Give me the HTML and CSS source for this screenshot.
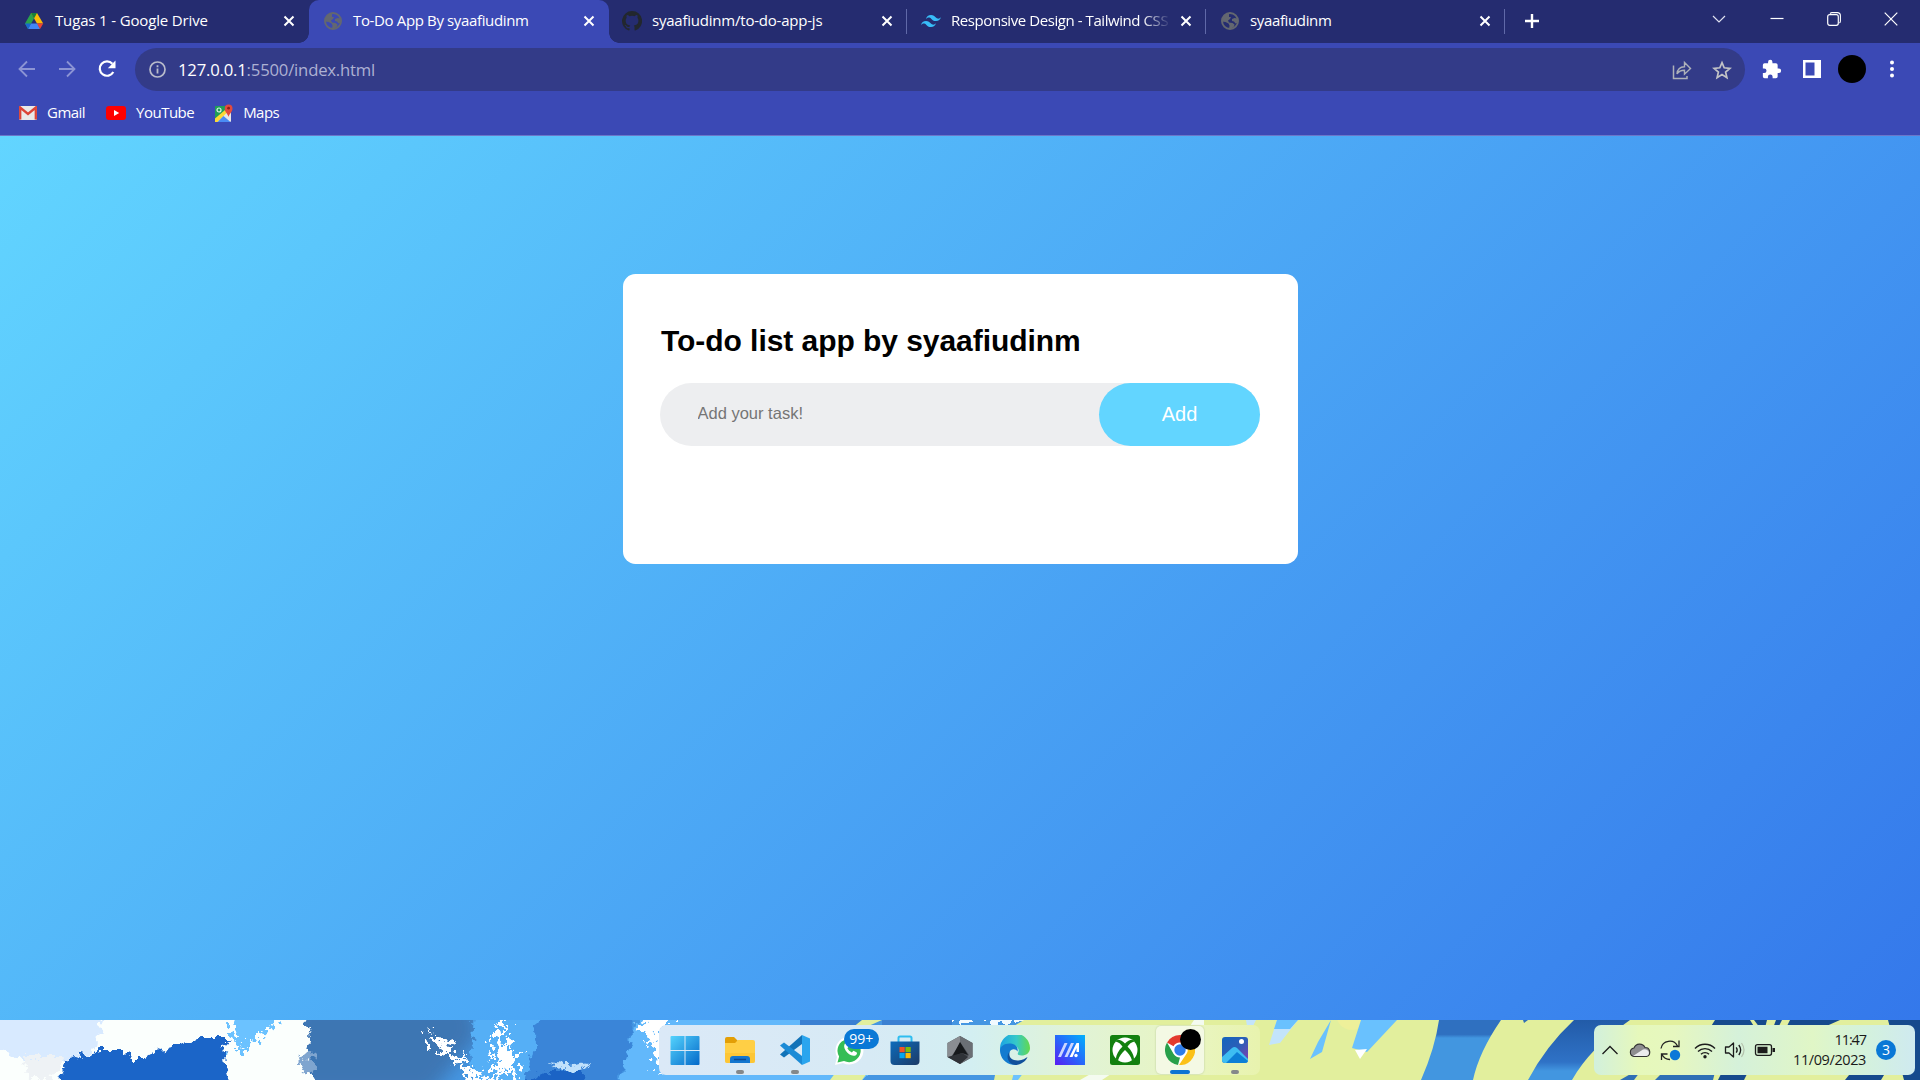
FILE: index.html
```html
<!DOCTYPE html>
<html lang="en">
<head>
<meta charset="utf-8">
<title>To-Do App By syaafiudinm</title>
<link rel="stylesheet" href="styles.css">
</head>
<body>
<svg class="defs" width="0" height="0">
  <symbol id="x" viewBox="0 0 14 14"><path d="M2.5 2.5l9 9M11.500 2.500l-9 9" stroke="#fff" stroke-width="2" fill="none"/></symbol>
  <symbol id="globe" viewBox="0 0 20 20"><circle cx="10" cy="10" r="8" fill="none" stroke="#636770" stroke-width="2"/><path d="M9 2C5 2 2 6 2 10.500l3.500.5 3 1.500 1 2-.5 3.500h2l3-2.500.5-2-2-1.500-3.500-.5-1-2 2-1.500 1-2H9zM12 8l2.500-1 3 .5.500 4-2.500 1-1.500-2-2-.5z" fill="#636770"/></symbol>
</svg>

<header class="browser">
  <nav class="tabstrip">
    <div class="tab">
      <svg width="20" height="20" viewBox="0 0 20 20"><path d="M7 2L1 12.500 4 18l6-10.500z" fill="#2ba24c"/><path d="M7 2h6l6.200 10.500H13z" fill="#fbbc05"/><path d="M7 2h6l-3 5.500z" fill="#188038"/><path d="M4 18l3-5.500h6.500L16 18z" fill="#4285f4"/><path d="M1 12.500h6L4 18z" fill="#1967d2"/><path d="M13 12.500h6.200L16 18z" fill="#ea4335"/></svg>
      <span class="label drive">Tugas 1 - Google Drive</span>
      <svg width="14" height="14"><use href="#x"/></svg>
    </div>
    <div class="tab active">
      <svg width="20" height="20"><use href="#globe"/></svg>
      <span class="label">To-Do App By syaafiudinm</span>
      <svg width="14" height="14"><use href="#x"/></svg>
    </div>
    <div class="tab">
      <svg width="20" height="20" viewBox="0 0 16 16"><path fill="#22272e" d="M8 0a8 8 0 0 0-2.530 15.590c.4.070.55-.17.55-.38v-1.490c-2.010.37-2.530-.49-2.690-.94-.09-.23-.48-.94-.82-1.130-.28-.15-.68-.52-.01-.53.63-.01 1.080.58 1.230.82.72 1.210 1.870.87 2.330.66.070-.52.28-.87.51-1.070-1.780-.2-3.640-.89-3.640-3.950 0-.87.31-1.590.82-2.150-.08-.2-.36-1.020.08-2.120 0 0 .67-.21 2.200.82a7.600 7.600 0 0 1 4 0c1.530-1.040 2.200-.82 2.200-.82.44 1.100.16 1.920.08 2.120.51.56.82 1.270.82 2.150 0 3.070-1.870 3.750-3.650 3.950.29.25.54.73.54 1.480v2.200c0 .21.15.46.55.38A8 8 0 0 0 8 0z"/></svg>
      <span class="label repo">syaafiudinm/to-do-app-js</span>
      <svg width="14" height="14"><use href="#x"/></svg>
    </div>
    <div class="tab ruled">
      <svg width="20" height="20" viewBox="0 0 54 54"><path fill="#38bdf8" d="M27 11c-7.200 0-11.700 3.600-13.500 10.800 2.700-3.600 5.850-4.950 9.450-4.050 2.050.51 3.520 2 5.150 3.660C30.740 24.090 33.810 27.200 40.500 27.200c7.200 0 11.700-3.600 13.500-10.800-2.700 3.600-5.850 4.950-9.450 4.050-2.050-.51-3.520-2-5.150-3.660C36.760 14.110 33.690 11 27 11zM13.500 27.200C6.300 27.200 1.800 30.800 0 38c2.700-3.600 5.850-4.950 9.450-4.050 2.050.51 3.520 2 5.150 3.660 2.640 2.680 5.710 5.790 12.400 5.790 7.200 0 11.700-3.600 13.500-10.800-2.700 3.600-5.850 4.950-9.450 4.050-2.050-.51-3.520-2-5.150-3.660-2.640-2.680-5.710-5.790-12.400-5.790z"/></svg>
      <span class="label fade">Responsive Design - Tailwind CSS</span>
      <svg width="14" height="14"><use href="#x"/></svg>
    </div>
    <div class="tab ruled last">
      <svg width="20" height="20"><use href="#globe"/></svg>
      <span class="label">syaafiudinm</span>
      <svg width="14" height="14"><use href="#x"/></svg>
    </div>
    <svg class="newtab" width="18" height="18" viewBox="0 0 18 18"><path d="M9 2v14M2 9h14" stroke="#fff" stroke-width="2.400"/></svg>
    <div class="controls">
      <svg width="14" height="14" viewBox="0 0 14 14"><path d="M1 4l6 6 6-6" fill="none" stroke="#dfe1f0" stroke-width="1.200"/></svg>
      <svg width="14" height="14" viewBox="0 0 14 14"><path d="M.5 6.500h13" stroke="#fff" stroke-width="1.200"/></svg>
      <svg width="14" height="14" viewBox="0 0 14 14"><rect x=".7" y="2.700" width="10.600" height="10.600" rx="2" fill="none" stroke="#fff" stroke-width="1.200"/><path d="M3 1.500Q4 .6 5 .6h5.200q3.200 0 3.200 3.200V9q0 1.300-1 2" fill="none" stroke="#fff" stroke-width="1.100"/></svg>
      <svg width="14" height="14" viewBox="0 0 14 14"><path d="M.7.7l12.600 12.600M13.300.7L.7 13.300" stroke="#fff" stroke-width="1.200"/></svg>
    </div>
  </nav>

  <div class="toolbar">
    <div class="cell"><svg width="18" height="18" viewBox="0 0 18 18"><path d="M17 9H2M9 1.500L1.500 9 9 16.500" fill="none" stroke="#8c94d4" stroke-width="1.800"/></svg></div>
    <div class="cell"><svg width="18" height="18" viewBox="0 0 18 18"><path d="M1 9h15M9 1.500L16.500 9 9 16.500" fill="none" stroke="#8c94d4" stroke-width="1.800"/></svg></div>
    <div class="cell"><svg width="20" height="20" viewBox="0 0 20 20"><path d="M16.300 13a7.200 7.200 0 1 1-.9-8.200" fill="none" stroke="#fff" stroke-width="2.200"/><path d="M18.500 1.500v7.700h-7.700z" fill="#fff"/></svg></div>
    <div class="omnibox">
      <svg width="17" height="17" viewBox="0 0 17 17"><circle cx="8.500" cy="8.500" r="7.500" fill="none" stroke="#b9bccb" stroke-width="1.700"/><path d="M8.500 7.600v5M8.500 4.300v1.900" stroke="#b9bccb" stroke-width="1.800"/></svg>
      <span class="url"><b>127.0.0.1</b>:5500/index.html</span>
      <div class="cell"><svg width="20" height="20" viewBox="0 0 20 20"><path d="M1.500 5.500v13h13.500V16" fill="none" stroke="#aeb1b9" stroke-width="1.500"/><path d="M5 14c.3-4.600 3-7 7.500-7.200V2.500l6 6-6 5.700V10.200C9 10.200 6.500 11.500 5 14z" fill="none" stroke="#aeb1b9" stroke-width="1.400"/></svg></div>
      <div class="cell"><svg width="20" height="20" viewBox="0 0 20 20"><path d="M10 2.600l2.200 5.200 5.700.5-4.300 3.700 1.300 5.600-4.900-3-4.900 3L6.400 12 2.100 8.300l5.700-.5z" fill="none" stroke="#c2c3c6" stroke-width="1.700"/></svg></div>
    </div>
    <div class="cell"><svg width="20" height="20" viewBox="1 0 23 23"><path fill="#fff" d="M20.500 11H19V7a2 2 0 0 0-2-2h-4V3.500a2.500 2.500 0 0 0-5 0V5H4a2 2 0 0 0-2 2v3.800h1.500a2.700 2.700 0 0 1 0 5.400H2V20a2 2 0 0 0 2 2h3.800v-1.500a2.700 2.700 0 0 1 5.400 0V22H17a2 2 0 0 0 2-2v-4h1.500a2.500 2.500 0 0 0 0-5z"/></svg></div>
    <div class="cell"><svg width="18" height="18" viewBox="0 0 18 18"><path fill-rule="evenodd" fill="#fff" d="M0 0h18v18H0zM2.500 2.500v13h9v-13z"/></svg></div>
    <div class="cell"><span class="avatar"></span></div>
    <div class="cell"><svg width="4" height="18" viewBox="0 0 4 18"><g fill="#fff"><circle cx="2" cy="2.500" r="2"/><circle cx="2" cy="9" r="2"/><circle cx="2" cy="15.500" r="2"/></g></svg></div>
  </div>

  <div class="bookmarks">
    <a><svg width="18" height="14" viewBox="0 0 18 14"><rect width="18" height="14" rx="1.500" fill="#e9e9e9"/><path d="M1.200 13.500V1.500L9 8l7.800-6.500v12" fill="none" stroke="#dc4437" stroke-width="2.300"/></svg><span>Gmail</span></a>
    <a><svg width="20" height="14" viewBox="0 0 20 14"><rect width="20" height="14" rx="3" fill="#f00"/><path d="M8 4l5.200 3L8 10z" fill="#fff"/></svg><span>YouTube</span></a>
    <a><svg width="18" height="18" viewBox="0 0 18 18"><rect x="0" y="2" width="16" height="16" rx="1" fill="#e6e6e6"/><path d="M0 2h12v5L0 17z" fill="#1f9d58"/><path d="M0 14.500L10 6l2 2.500L2.500 18H0z" fill="#fdd835"/><path d="M2.500 18l6-6 7 6z" fill="#4a8bf5"/><circle cx="4" cy="6" r="2" fill="none" stroke="#dff2e7" stroke-width="1.200"/><path d="M13.500 13c-.4-3-3.800-5-3.800-8.500a3.900 3.900 0 0 1 7.800 0c0 3.500-3.600 5.500-4 8.500z" fill="#e34a3d"/><circle cx="13.600" cy="4.200" r="1.400" fill="#8c1f16"/></svg><span>Maps</span></a>
  </div>
</header>

<main class="page">
  <section class="todo">
    <h1>To-do list app by syaafiudinm</h1>
    <form class="row">
      <input type="text" placeholder="Add your task!">
      <button type="button">Add</button>
    </form>
  </section>
</main>

<footer class="taskbar">
  <svg class="wallpaper" width="1920" height="60" viewBox="0 0 1920 60" preserveAspectRatio="none">
    <defs>
      <filter id="rough" x="-5%" y="-30%" width="110%" height="160%" color-interpolation-filters="sRGB"><feTurbulence type="fractalNoise" baseFrequency=".13" numOctaves="4" seed="4"/><feDisplacementMap in="SourceGraphic" scale="16" xChannelSelector="R" yChannelSelector="G"/></filter>
      <filter id="spray" x="-5%" y="-30%" width="110%" height="160%" color-interpolation-filters="sRGB"><feTurbulence type="fractalNoise" baseFrequency=".16" numOctaves="4" seed="9"/><feDisplacementMap in="SourceGraphic" scale="34" xChannelSelector="R" yChannelSelector="G"/></filter>
      <filter id="soft"><feGaussianBlur stdDeviation="9"/></filter>
      <linearGradient id="d1" x2="0" y2="1"><stop offset=".24" stop-color="#2f70c0"/><stop offset=".3" stop-color="#4296e0"/></linearGradient>
      <linearGradient id="d2" x2="0" y2="1"><stop offset="0" stop-color="#225ba8"/><stop offset=".7" stop-color="#2f72c6"/><stop offset=".85" stop-color="#4296e0"/></linearGradient>
    </defs>
    <rect width="1920" height="60" fill="#4596e2"/>
    <path d="M290 -20h180l10 35-50 60H290z" fill="#3c76b3" filter="url(#soft)"/>
    <g filter="url(#rough)">
      <path d="M475 -10h85v50l-30 30h-60z" fill="#55aff6"/>
      <path d="M540 -10h96l-10 50-12 30h-90z" fill="#3a85d8"/>
      <path d="M636 5l40-15h190v80H617z" fill="#62b8fb"/>
      <path d="M525 62l25-12 30 0 10 22h-65z" fill="#1b63c5"/>
      <path d="M-20 -20h324l6 40-4 24 20 36H-20z" fill="#fbfffd"/>
      <path d="M-20 -20h124l-8 48-34 16L26 42-20 24z" fill="#d8eaff"/>
      <path d="M24 36l44 0-18 24H26z" fill="#eef2f5"/>
      <path d="M54 70l14-30 30-10 25 0 8 8 14 0 14-8 16-4 26-7h32l-10 6 2 20 8 26z" fill="#1b65c8"/>
      <path d="M298 38l14-4 6 14-14 6z" fill="#7fa5cf"/>
      <path d="M548 43l20 2 22-3-12 8-16-1z" fill="#bfe0fb"/>
    </g>
    <g filter="url(#spray)">
      <path d="M234 -10h46l-8 20-16 4-10 18-10-1-4-20z" fill="#6bc2ff"/>
      <path d="M424 10l12 6 16 10 10 16 14 8 16 24h-18l-14-28-10-8-14-10z" fill="#fff"/>
      <path d="M502 -8h8l-6 16 2 16 12 10-2 18-16-4-6 22-7-6 8-20-1-20z" fill="#fff"/>
      <path d="M638 -6h30v62l-12-14-4-20-10-12z" fill="#fff"/>
    </g>
    <g filter="url(#rough)"><path d="M900 -10h70v12h-70zM985 -10h80v12h-80z" fill="#f2faff"/></g>
    <path d="M800 0h62v8h-62zM882 0h70v8h-70z" fill="#3a80d2"/>
    <path d="M862 0h20l-18 8h-12zM836 52h32l-6 8h-32zM1024 0l-20 12-10 48H1920V0z" fill="#e2ef9d"/>
    <path d="M1080 60l14-8h20l-12 8zM1194 0h10v6h-14z" fill="#f4fbf0"/>
    <path d="M1014 52h10l-6 8h-6z" fill="#6bc2ff"/>
    <circle cx="1352" cy="-6" r="16" fill="#eef09a"/>
    <path d="M1246 0h10l-3 6h-6zM1277 0h21l-18 23-11 2z" fill="#c3e4fb"/>
    <path d="M1277 0h21l-8 9h-16zM1331 0l-9 32-12 7 8-17zM1361 0h36l-30 32-15-4z" fill="#69c1fe"/>
    <path d="M1355 30l12-1-7 10z" fill="#fff"/>
    <path d="M1439 0h62q-22 32-28 60h-52q14-32 18-60z" fill="url(#d1)"/>
    <path d="M1574 0h56q-40 28-58 60h-44q18-34 46-60z" fill="url(#d2)"/>
    <path d="M1523 0h5l-4 3zM1620 60l14-8h6l-6 8zM1655 60l8-8h52l-2 8z" fill="#2f6fb5"/>
    <path d="M1715 0h125l-18 8h-112zM1722 52h26l-4 8h-26zM1845 60l8-10h34l-6 10zM1888 0h32v60h-16z" fill="#164a8d"/>
    <path d="M1750 0h4l6 8h-5zM1767 0h9l-3 8h-8zM1782 0h8l-4 8h-8z" fill="#e2ef9d"/>
  </svg>

  <div class="dock">
    <div class="app"><svg viewBox="0 0 30 30"><defs><linearGradient id="w" x2="1" y2="1"><stop stop-color="#54d3fd"/><stop offset="1" stop-color="#0469c9"/></linearGradient></defs><path fill="url(#w)" d="M.5 2q0-1 1-1H14.500v14H.5zM15.500 1h13q1 0 1 1v13h-14zM.5 16h14v14H1.500q-1 0-1-1zM15.500 16h14v13q0 1-1 1h-13z"/></svg></div>
    <div class="app run"><svg viewBox="0 0 30 30"><path d="M0 4q0-2 2-2h7l4 4v4H0z" fill="#e39f06"/><path d="M0 8l10 0 3-3h15q2 0 2 2v19q0 2-2 2H2q-2 0-2-2z" fill="#ffcf45"/><path d="M0 18h30v8q0 2-2 2H2q-2 0-2-2z" fill="#fbc02d" opacity=".6"/><path d="M5 28v-4q0-3 3-3h14q3 0 3 3v4z" fill="#1376cf"/><path d="M9 24.500h12" stroke="#0b4a91" stroke-width="1.500"/></svg></div>
    <div class="app run"><svg viewBox="0 0 30 30"><path d="M22 0l8 3.500v23L22 30z" fill="#2aa5ee"/><path d="M22 0v9L4 22.500 0 19.500z" fill="#1273b8"/><path d="M22 30v-9L4 7.500 0 10.500z" fill="#1b8bd6"/></svg></div>
    <div class="app"><svg viewBox="0 0 30 30"><path d="M0 30l2-8A14 14 0 1 1 8 28z" fill="#fff"/><path d="M2.500 27.500l1.600-6A11.600 11.600 0 1 1 9 26z" fill="#35bd55"/><path d="M10 8.500c1-1 2-.8 2.600.6l1 2.300-1.200 1.900c1 2 2.400 3.200 4.400 4.100l1.700-1.700 3 1.500c1 .7.400 2.300-.6 3-3.200 2-8-.8-10.300-4.600C9 13 8.600 10 10 8.500z" fill="#fff"/></svg><span class="count">99+</span></div>
    <div class="app"><svg viewBox="0 0 30 30"><defs><linearGradient id="s" x2="1" y2="1"><stop stop-color="#0c6cbc"/><stop offset="1" stop-color="#1d3a66"/></linearGradient></defs><path d="M8.500 7V3q0-1.500 1.500-1.500h10q1.500 0 1.500 1.500v4" fill="none" stroke="#2fbdf0" stroke-width="2"/><path d="M.5 6.500h29V26q0 4-4 4h-21q-4 0-4-4z" fill="url(#s)"/><path d="M9.500 12H14.700v5.200H9.500z" fill="#f35325"/><path d="M15.500 12h5.200v5.200h-5.200z" fill="#81bc06"/><path d="M9.500 18h5.200v5.200H9.500z" fill="#05a6f0"/><path d="M15.500 18h5.200v5.200h-5.200z" fill="#ffba08"/></svg></div>
    <div class="app"><svg viewBox="0 0 30 30"><path d="M15 1l12.500 7v14L15 29 2.500 22V8z" fill="#4a4e54"/><path d="M15 1v8L6 22l-3.500 0V8z" fill="#8a8d92"/><path d="M27.500 8v14L15 29l9-9L15 7V1z" fill="#6b6f75"/><path d="M15 7l8 13-6-2-10 4z" fill="#17191c"/><path d="M2.500 22L17 18l6 4-8 7z" fill="#2f3237"/></svg></div>
    <div class="app"><svg viewBox="0 0 30 30"><defs><linearGradient id="e" x2="1"><stop stop-color="#1ba4e4"/><stop offset=".55" stop-color="#36c9c8"/><stop offset="1" stop-color="#63d94c"/></linearGradient></defs><path d="M0 14A15 15 0 0 1 30 13c0 5-4 7.500-8.500 7.500-3 0-4.500-1-3.500-2.600 2-3.400-.5-7.400-6-7.400C5 10.500 1 14 .5 18z" fill="url(#e)"/><path d="M0 15c.5-4 5-7 10.500-6.500 5 .5 8 4 7 8-2-3.500-7-2.500-8 1C8 23 13 28 19 28q-3 2-6 1.800C5.500 29 0 23 0 15z" fill="#137bd0"/><path d="M9.500 17c-1.500 5.500 3 9 9 8.500 4 0 7-2.500 9-3.500C25.500 27 20 30 15 30 8 29 5.500 21 9.500 17z" fill="#11509b"/></svg></div>
    <div class="app"><svg viewBox="0 0 30 30"><defs><linearGradient id="m" x1="0" y1="1" x2="1" y2="0"><stop stop-color="#5a1cf2"/><stop offset=".5" stop-color="#2669fb"/><stop offset="1" stop-color="#00b1fb"/></linearGradient></defs><path fill="url(#m)" d="M0 0h30v30H0z"/><path d="M3 22L9.500 8h3L6 22zM9.500 22L16 8h3l-6.500 14z" fill="#cdd6ff"/><path d="M14.500 22L21.500 8H24v9h-2.500v-4L17.500 22z" fill="#fff"/><circle cx="21" cy="20.500" r="1.700" fill="#fff"/></svg></div>
    <div class="app"><svg viewBox="0 0 30 30"><rect width="30" height="30" rx="2.500" fill="#13800f"/><circle cx="15" cy="15" r="12.500" fill="#fff"/><path d="M15 8.500c-2-2-5-3.800-7.300-3.700L5.500 6.500c3 .3 5.500 3 7 5C9 15 6 20 6 24l2 1.500c1-4 4-8 7-10.500 3 2.500 6 6.500 7 10.500l2-1.500c0-4-3-9-6.500-12.500 1.500-2 4-4.700 7-5l-2.200-1.700C20 4.700 17 6.500 15 8.500z" fill="#13800f"/></svg></div>
    <div class="app current"><svg viewBox="0 0 30 30"><circle cx="15" cy="15" r="15" fill="#fff"/><path d="M15 0A15 15 0 0 1 28 7.500H15a7.500 7.500 0 0 0-6.500 3.700L2 7.500A15 15 0 0 1 15 0z" fill="#e33b2e"/><path d="M2 7.500l6.500 11.300A7.500 7.500 0 0 0 15 22.500l-2 7.400A15 15 0 0 1 2 7.500z" fill="#28a04a"/><path d="M28 7.500A15 15 0 0 1 14 30l7.500-11.200A7.500 7.500 0 0 0 20.300 9V7.500z" fill="#fbc116"/><circle cx="15" cy="15" r="7" fill="#fff"/><circle cx="15" cy="15" r="5.700" fill="#2f7de9"/></svg><span class="dot"></span></div>
    <div class="app run"><svg viewBox="0 0 30 30"><defs><linearGradient id="p" x1="0" y1="0" x2="1" y2="1"><stop stop-color="#1364bd"/><stop offset=".5" stop-color="#2b5fb8"/><stop offset="1" stop-color="#8a3bb0"/></linearGradient></defs><rect x="2" y="2" width="26" height="26" rx="3" fill="url(#p)"/><path d="M2 22l10-9q2.500-2 5 0l11 11v1q0 3-3 3H5q-3 0-3-3z" fill="#3dbdf2"/><path d="M6 28L17 17l11 9q-1 2-3 2z" fill="#0c7fd6"/><circle cx="21.500" cy="6.500" r="2.500" fill="#fff"/></svg></div>
  </div>

  <div class="tray">
    <div class="item"><svg width="18" height="10" viewBox="0 0 18 10"><path d="M1.500 9L9 1.500 16.500 9" fill="none" stroke="#1c1c1c" stroke-width="1.300"/></svg></div>
    <div class="item"><svg width="22" height="16" viewBox="0 0 22 16"><path d="M5 14.500a4.300 4.300 0 0 1 0-8.500A6 6 0 0 1 16 5.500a4.600 4.600 0 0 1 1.500 9z" fill="#8e8e90" stroke="#333" stroke-width="1.100"/><path d="M4 14l10-6.500q5-1 6 3.500-.5 3-3 3z" fill="#ececee"/></svg></div>
    <div class="item"><svg width="22" height="22" viewBox="0 0 22 22"><path d="M2 9.500A8.800 8.800 0 0 1 18.500 7M20 1.500v6h-6M2.500 21v-6h6M3 15.500a8.800 8.800 0 0 0 8 5" fill="none" stroke="#222" stroke-width="1.300"/><circle cx="16" cy="16" r="5.200" fill="#0b78d8"/></svg></div>
    <div class="item wifi"><svg width="22" height="17" viewBox="0 0 22 17"><path d="M1 6.500a14 14 0 0 1 20 0M4 9.500a10 10 0 0 1 14 0M7 12.300a5.700 5.700 0 0 1 8 0" fill="none" stroke="#1c1c1c" stroke-width="1.400"/><circle cx="11" cy="14.800" r="1.700" fill="#1c1c1c"/></svg></div>
    <div class="item"><svg width="22" height="18" viewBox="0 0 22 18"><path d="M1.500 6h3.500L9.500 2v14L5 12H1.500z" fill="none" stroke="#1c1c1c" stroke-width="1.300" stroke-linejoin="round"/><path d="M12.200 6.300q2 2.700 0 5.400M14.800 4q3.700 5 0 10" fill="none" stroke="#1c1c1c" stroke-width="1.300"/><path d="M17.500 2q5 7 0 14" fill="none" stroke="#b5c2ac" stroke-width="1.200"/></svg></div>
    <div class="item"><svg width="22" height="14" viewBox="0 0 22 14"><rect x="1.500" y="1.700" width="16" height="10.600" rx="2" fill="none" stroke="#1c1c1c" stroke-width="1.300"/><path d="M3.500 3.700h10v6.600h-10zM18.500 5H21v4h-2.500z" fill="#1c1c1c"/></svg></div>
    <div class="clock"><span class="time">11:47</span><span class="date">11/09/2023</span></div>
    <span class="notice">3</span>
  </div>
</footer>
</body>
</html>
```
FILE: styles.css
```css
* { box-sizing: border-box; margin: 0; padding: 0; }

body {
  width: 1920px;
  height: 1080px;
  overflow: hidden;
  display: flex;
  flex-direction: column;
  font-family: "Open Sans", "Noto Sans", sans-serif;
}

svg { display: block; flex: none; }
.defs { position: absolute; }

/* browser chrome */
.browser {
  height: 136px;
  background: #3b49b5;
  border-bottom: 1px solid #6b76c9;
  color: #fff;
}

.tabstrip {
  display: flex;
  align-items: center;
  height: 43px;
  padding-left: 10px;
  background: #252c70;
}

.tab {
  position: relative;
  display: flex;
  align-items: center;
  gap: 10px;
  width: 299px;
  height: 43px;
  padding: 0 13px 2px 14px;
}

.label {
  flex: 1;
  padding-bottom: 2px;
  white-space: nowrap;
  font-size: 15px;
  letter-spacing: -0.36px;
}
.label.drive { padding-left: 1px; letter-spacing: -0.15px; }
.label.repo { letter-spacing: -0.22px; }
.label.fade {
  margin-right: -4px;
  letter-spacing: -0.43px;
  -webkit-mask-image: linear-gradient(90deg, #000 86%, transparent 99%);
  mask-image: linear-gradient(90deg, #000 86%, transparent 99%);
}

.tab.active {
  width: 300px;
  margin-right: -1px;
  background: #3b49b5;
  border-radius: 10px 10px 0 0;
}
.tab.active .label { margin-right: 1px; }
.tab.active::before,
.tab.active::after {
  content: "";
  position: absolute;
  bottom: 0;
  width: 10px;
  height: 10px;
}
.tab.active::before {
  left: -10px;
  background: radial-gradient(circle at 0 0, transparent 9.5px, #3b49b5 10px);
}
.tab.active::after {
  right: -10px;
  background: radial-gradient(circle at 100% 0, transparent 9.5px, #3b49b5 10px);
}

.tab.ruled::before,
.tab.last::after {
  content: "";
  position: absolute;
  left: -1px;
  top: 9px;
  width: 1px;
  height: 25px;
  background: #6069a8;
}
.tab.last::after { left: auto; right: 0; }

.newtab { margin: 0 0 1px 18px; }

.controls {
  display: grid;
  grid-template-columns: repeat(4, 57.3px);
  justify-items: center;
  margin-left: auto;
  padding-bottom: 6px;
}

.toolbar {
  display: flex;
  align-items: center;
  height: 52px;
  padding: 0 8px 0 7px;
}
.cell {
  display: flex;
  align-items: center;
  justify-content: center;
  width: 40px;
  height: 43px;
}
.omnibox {
  display: flex;
  align-items: center;
  flex: 1;
  height: 43px;
  margin: 1px 7px 0 8px;
  padding: 0 3px 0 14px;
  border-radius: 22px;
  background: #333b88;
}
.url {
  flex: 1;
  margin: 0 0 1px 12px;
  font-size: 16.7px;
  letter-spacing: -0.2px;
  color: #adb1d3;
}
.url b { font-weight: 400; color: #fff; }
.avatar {
  width: 28px;
  height: 28px;
  border-radius: 50%;
  background: #000;
}

.bookmarks {
  display: flex;
  align-items: center;
  gap: 21px;
  height: 36px;
  padding-left: 19px;
  font-size: 15px;
  letter-spacing: -0.52px;
}
.bookmarks a { display: flex; align-items: center; gap: 10px; }
.bookmarks span { padding-bottom: 2px; }

/* page */
.page {
  display: flex;
  justify-content: center;
  align-items: flex-start;
  height: 884px;
  padding: 138px 0 0 1px;
  background: linear-gradient(135deg, #62d5ff, #3478eb);
  font-family: "Liberation Sans", Arial, sans-serif;
}
.todo {
  width: 675px;
  height: 290px;
  padding: 47px 38px 0 37px;
  border-radius: 12.5px;
  background: #fff;
}
.todo h1 {
  margin: 0 0 22px 1px;
  font-size: 30px;
  line-height: 40px;
  letter-spacing: -0.05px;
  color: #000;
}
.row {
  display: flex;
  height: 63px;
  border-radius: 32px;
  background: #edeef0;
}
.row input {
  flex: 1;
  min-width: 0;
  padding: 0 0 2px 37.5px;
  border: 0;
  outline: 0;
  background: transparent;
  font: 16.5px "Liberation Sans", Arial, sans-serif;
}
.row input::placeholder { color: #757575; }
.row button {
  width: 161px;
  border: 0;
  border-radius: 32px;
  background: #62d5ff;
  color: #fff;
  font: 20px "Liberation Sans", Arial, sans-serif;
}

/* taskbar */
.taskbar {
  position: relative;
  display: flex;
  justify-content: space-between;
  height: 60px;
  padding: 5px 5px 5px 659px;
}
.wallpaper { position: absolute; left: 0; top: 0; }

.dock,
.tray {
  position: relative;
  display: flex;
  align-items: center;
  height: 50px;
  border-radius: 7px;
}
.dock {
  gap: 7.1px;
  width: 601px;
  padding: 0 1.5px;
  background: linear-gradient(90deg, #dbe9f7, #d7eaf5 35%, #d3eff2 52%, #e0f3d8 68%, #e9f5bf 90%, #e8f3ae);
}
.app {
  position: relative;
  display: flex;
  align-items: center;
  justify-content: center;
  flex: none;
  width: 48px;
  height: 48px;
  border-radius: 5px;
}
.app > svg { width: 30px; height: 30px; }
.app.current {
  background: #f4f9e4;
  box-shadow: 0 0 1px 1px rgba(200, 215, 170, 0.5);
}
.app.run::after,
.app.current::after {
  content: "";
  position: absolute;
  bottom: 0;
  width: 8px;
  height: 4px;
  border-radius: 2px;
  background: #85888a;
}
.app.current::after { width: 20px; background: #0a74d2; }
.dot {
  position: absolute;
  right: 3px;
  top: 3px;
  width: 21px;
  height: 21px;
  border-radius: 50%;
  background: #000;
}
.count {
  position: absolute;
  left: 18px;
  top: 3px;
  width: 35px;
  height: 20px;
  border-radius: 10px;
  background: #0a78d6;
  color: #fff;
  font-size: 14px;
  line-height: 20px;
  text-align: center;
}

.tray {
  width: 321px;
  padding-left: 1px;
  background: linear-gradient(90deg, #d2f0dc, #e6f8bb 14%, #e6f7bf 25%, #d5f1da 45%, #e0f6c6 68%, #d4f2dc 84%, #cfeaf0);
}
.item {
  display: flex;
  align-items: center;
  justify-content: center;
  width: 30px;
  height: 50px;
}
.item.wifi { margin-left: 5px; }
.clock {
  flex: 1;
  display: flex;
  flex-direction: column;
  align-items: flex-end;
  color: #1a1a1a;
  font-size: 14.500px;
  line-height: 20px;
}
.time { letter-spacing: -1.1px; }
.date { letter-spacing: -0.4px; }
.notice {
  width: 20px;
  height: 20px;
  margin: 0 19px 0 10px;
  border-radius: 50%;
  background: #0a78d6;
  color: #fff;
  font-size: 14px;
  line-height: 20px;
  text-align: center;
}
```
